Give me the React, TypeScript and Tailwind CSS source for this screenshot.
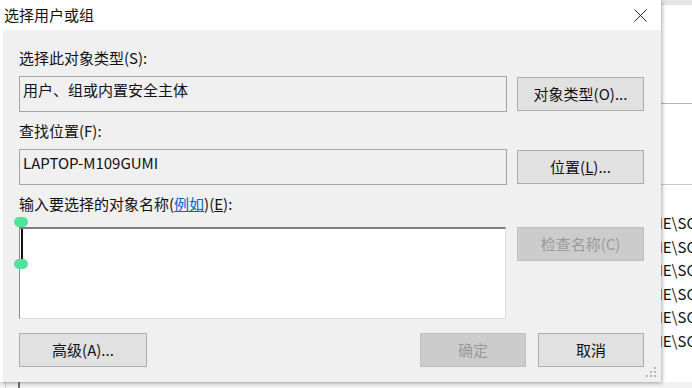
import React from 'react'

const btn =
  'flex items-center justify-center border border-[#adadad] bg-[#e1e1e1] text-[15px] text-[#111]'
const btnOff =
  'flex items-center justify-center border border-[#bfbfbf] bg-[#cccccc] text-[15px] text-[#9a9a9a]'

function Handle({ className }: { className: string }) {
  return (
    <div
      className={`absolute h-[10px] w-[14px] rounded-full bg-[#52e39b] blur-[0.5px] ${className}`}
    />
  )
}

function Grip() {
  // little resize dots in the lower right corner
  const dots = [
    [8, 0],
    [4, 4],
    [8, 4],
    [0, 8],
    [4, 8],
    [8, 8],
  ]
  return (
    <svg width="11" height="11" className="absolute bottom-[4px] right-[4px]">
      {dots.map(([x, y], i) => (
        <rect key={i} x={x} y={y} width="2" height="2" fill="#b8b8b8" />
      ))}
    </svg>
  )
}

export default function App() {
  return (
    <div className="relative h-[388px] w-[692px] overflow-hidden bg-white font-['Microsoft_YaHei','Noto_Sans_CJK_SC',sans-serif] text-[#111]">
      {/* Window behind the dialog */}
      <div className="flex h-full flex-col">
        <div className="h-[5px] bg-[#e4e4e4]" />
        <div className="h-[98px]" />
        <div className="h-px bg-[#b4b4b4]" />
        <div className="h-[80px]" />
        <div className="h-px bg-[#c8c8c8]" />
        <div className="flex flex-col items-end pt-[26px] text-[15px] leading-[23.6px]">
          <div className="mr-[-4px]">NE\SC</div>
          <div className="mr-[-4px]">NE\SC</div>
          <div className="mr-[-4px]">NE\SC</div>
          <div className="mr-[-4px]">NE\SC</div>
          <div className="mr-[-4px]">NE\SC</div>
          <div className="mr-[-4px]">NE\SC</div>
        </div>
        <div className="mt-auto flex h-[6px] bg-[#f2f2f2]">
          <div className="ml-[5px] w-px bg-[#d0d0d0]" />
          <div className="ml-[12px] w-[2px] bg-[#707070]" />
        </div>
      </div>

      {/* Dialog */}
      <div className="absolute left-0 top-0 flex h-[382px] w-[661px] flex-col bg-white shadow-[1px_1px_4px_rgba(0,0,0,0.35)]">
        {/* Title bar */}
        <div className="flex h-[30px] items-center justify-between pl-[4px] pr-[14px]">
          <span className="text-[15px]">选择用户或组</span>
          <svg width="13" height="13" viewBox="0 0 13 13">
            <path d="M0.5 0.5 L12.5 12.5 M12.5 0.5 L0.5 12.5" stroke="#222" strokeWidth="1" />
          </svg>
        </div>

        {/* Body */}
        <div className="relative ml-[3px] flex flex-1 flex-col bg-[#f0f0f0] pl-[16px] pr-[14px] pt-[17px]">
          <div className="text-[15px] leading-[22px]">选择此对象类型(S):</div>
          <div className="mt-[7px] flex items-center gap-[10px]">
            <div className="h-[36px] w-[488px] border border-[#a5a5a5] px-[3px] pt-[2px] text-[15px] leading-[22px]">
              用户、组或内置安全主体
            </div>
            <div className={`${btn} h-[34px] w-[127px]`}>对象类型(O)...</div>
          </div>

          <div className="mt-[8px] text-[15px] leading-[22px]">查找位置(F):</div>
          <div className="mt-[7px] flex items-center gap-[10px]">
            <div className="h-[36px] w-[488px] border border-[#a5a5a5] px-[3px] pt-[2px] text-[15px] leading-[22px]">
              LAPTOP-M109GUMI
            </div>
            <div className={`${btn} h-[34px] w-[127px]`}>
              位置(<span className="underline">L</span>)...
            </div>
          </div>

          <div className="mt-[8px] text-[15px] leading-[22px]">
            输入要选择的对象名称(<span className="text-[#0066cc] underline">例如</span>)(
            <span className="underline">E</span>):
          </div>
          <div className="mt-[12px] flex items-start gap-[11px]">
            <div className="relative h-[92px] w-[487px] border-t-2 border-r border-b border-l border-t-[#7d7d7d] border-r-[#dcdcdc] border-b-[#dcdcdc] border-l-[#8a8a8a] bg-white">
              <div className="absolute left-[1px] top-0 h-[38px] w-[2px] bg-[#111]" />
              <Handle className="left-[-6px] top-[-12px]" />
              <Handle className="left-[-6px] top-[30px]" />
            </div>
            <div className={`${btnOff} h-[34px] w-[127px]`}>检查名称(C)</div>
          </div>

          <div className="mt-[14px] mr-[3px] flex items-center">
            <div className={`${btn} h-[34px] w-[128px]`}>高级(A)...</div>
            <div className={`${btnOff} ml-auto h-[34px] w-[106px]`}>确定</div>
            <div className={`${btn} ml-[12px] h-[34px] w-[106px]`}>取消</div>
          </div>
          <Grip />
        </div>
      </div>
    </div>
  )
}
